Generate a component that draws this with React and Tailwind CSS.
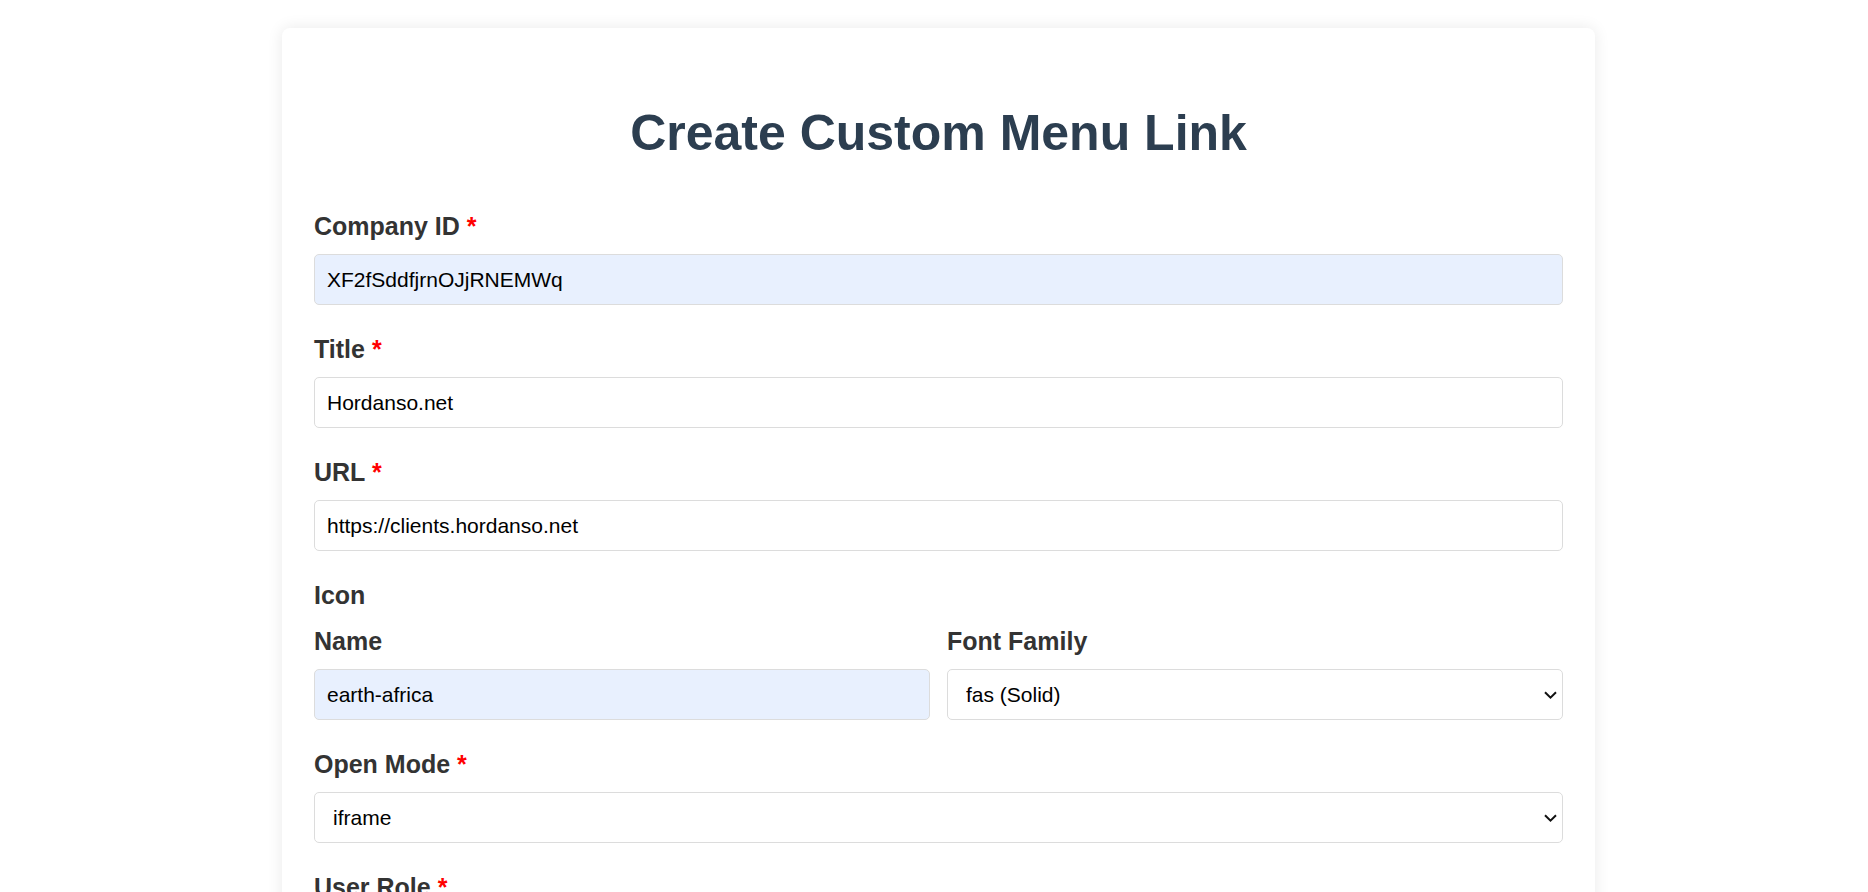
import React, { useState } from 'react';

const FONT = "font-['Liberation_Sans',Arial,sans-serif]";

const Required = () => <span className="text-[#ff0000]"> *</span>;

const FieldLabel = ({ children, required, htmlFor, className = 'mb-[13px]' }) => (
    <label
        htmlFor={htmlFor}
        className={`block text-[25px] leading-[30px] font-bold text-[#333] ${className}`}
    >
        {children}
        {required && <Required />}
    </label>
);

const TextInput = ({ id, value, onChange, autofilled }) => (
    <input
        id={id}
        type="text"
        value={value}
        onChange={(e) => onChange(e.target.value)}
        className={`block w-full h-[51px] px-[12px] text-[21px] text-black border border-[#dcdcdc] rounded-[5px] outline-none ${
            autofilled ? 'bg-[#e8f0fe]' : 'bg-white'
        }`}
    />
);

const SelectInput = ({ id, value, onChange, options }) => (
    <div className="relative">
        <select
            id={id}
            value={value}
            onChange={(e) => onChange(e.target.value)}
            className="block w-full h-[51px] pl-[18px] pr-10 text-[21px] text-black bg-white border border-[#dcdcdc] rounded-[5px] outline-none appearance-none"
        >
            {options.map((opt) => (
                <option key={opt.value} value={opt.value}>
                    {opt.label}
                </option>
            ))}
        </select>
        {/* chevron drawn over the select */}
        <svg
            className="pointer-events-none absolute right-[6px] top-1/2 -translate-y-1/2"
            width="13"
            height="8"
            viewBox="0 0 13 8"
            fill="none"
        >
            <path d="M1 1.2 6.5 6.6 12 1.2" stroke="#111" strokeWidth="2" />
        </svg>
    </div>
);

const App = () => {
    const [companyId, setCompanyId] = useState('XF2fSddfjrnOJjRNEMWq');
    const [title, setTitle] = useState('Hordanso.net');
    const [url, setUrl] = useState('https://clients.hordanso.net');
    const [iconName, setIconName] = useState('earth-africa');
    const [iconFamily, setIconFamily] = useState('fas');
    const [openMode, setOpenMode] = useState('iframe');
    const [userRole, setUserRole] = useState('admin');

    return (
        <div className={`h-screen overflow-hidden bg-white ${FONT}`}>
            <div className="ml-[282px] mt-[28px] w-[1313px] bg-white rounded-[8px] shadow-[0_0_16px_rgba(0,0,0,0.09)] px-8 pt-8 pb-10">
                <h1 className="mt-[43px] mb-[48px] text-center text-[50px] leading-[60px] font-bold text-[#2c3e50]">
                    Create Custom Menu Link
                </h1>

                <form onSubmit={(e) => e.preventDefault()}>
                    <div className="mb-[29px]">
                        <FieldLabel htmlFor="companyId" required>Company ID</FieldLabel>
                        <TextInput id="companyId" value={companyId} onChange={setCompanyId} autofilled />
                    </div>

                    <div className="mb-[29px]">
                        <FieldLabel htmlFor="title" required>Title</FieldLabel>
                        <TextInput id="title" value={title} onChange={setTitle} />
                    </div>

                    <div className="mb-[29px]">
                        <FieldLabel htmlFor="url" required>URL</FieldLabel>
                        <TextInput id="url" value={url} onChange={setUrl} />
                    </div>

                    <div className="mb-[29px]">
                        <FieldLabel className="mb-[16px]">Icon</FieldLabel>
                        <div className="grid grid-cols-2 gap-[17px]">
                            <div>
                                <FieldLabel htmlFor="iconName">Name</FieldLabel>
                                <TextInput id="iconName" value={iconName} onChange={setIconName} autofilled />
                            </div>
                            <div>
                                <FieldLabel htmlFor="iconFamily">Font Family</FieldLabel>
                                <SelectInput
                                    id="iconFamily"
                                    value={iconFamily}
                                    onChange={setIconFamily}
                                    options={[
                                        { value: 'fas', label: 'fas (Solid)' },
                                        { value: 'far', label: 'far (Regular)' },
                                        { value: 'fab', label: 'fab (Brands)' }
                                    ]}
                                />
                            </div>
                        </div>
                    </div>

                    <div className="mb-[29px]">
                        <FieldLabel htmlFor="openMode" required>Open Mode</FieldLabel>
                        <SelectInput
                            id="openMode"
                            value={openMode}
                            onChange={setOpenMode}
                            options={[
                                { value: 'iframe', label: 'iframe' },
                                { value: 'new_tab', label: 'new tab' }
                            ]}
                        />
                    </div>

                    <div className="mb-[29px]">
                        <FieldLabel htmlFor="userRole" required>User Role</FieldLabel>
                        <SelectInput
                            id="userRole"
                            value={userRole}
                            onChange={setUserRole}
                            options={[
                                { value: 'admin', label: 'Admin' },
                                { value: 'client', label: 'Client' }
                            ]}
                        />
                    </div>
                </form>
            </div>
        </div>
    );
};

export default App;
